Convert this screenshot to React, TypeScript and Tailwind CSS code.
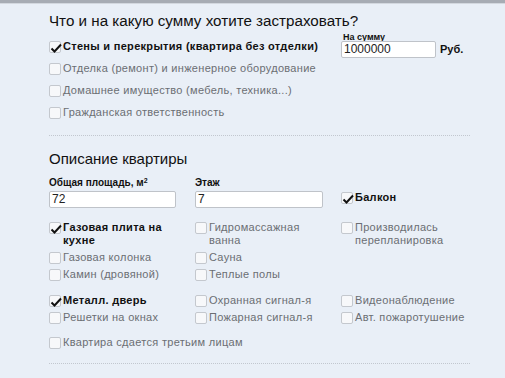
import React from "react";

function Box({ checked }: { checked?: boolean }) {
  return (
    <span className="relative block w-[12px] h-[12px] shrink-0 rounded-[2px] border border-[#c4c8ce] bg-[#f7f8fa]">
      {checked && (
        <svg viewBox="0 0 14 14" className="absolute left-[-1px] top-[-1px] w-[14px] h-[14px]">
          <path d="M2.5 7.5 L5.5 10.5 L12 3.5" fill="none" stroke="#111" strokeWidth="2" />
        </svg>
      )}
    </span>
  );
}

function Check({ label, checked, className = "" }: { label: React.ReactNode; checked?: boolean; className?: string }) {
  return (
    <div className={`flex items-start gap-[2px] text-[11px] leading-[13px] ${className}`}>
      <div className="pt-[1px]"><Box checked={checked} /></div>
      <span
        className={
          checked
            ? "font-bold text-[#111] tracking-[0.3px]"
            : "text-[#6b6e73] tracking-[0.3px]"
        }
      >
        {label}
      </span>
    </div>
  );
}

const field = "h-[17px] bg-white border border-[#bfc3c9] rounded-[2px] px-[2px] text-[12px] leading-[15px] text-[#222]";

export default function App() {
  return (
    <div className="w-[505px] h-[378px] bg-[#e9eff7] overflow-hidden" style={{ fontFamily: '"Liberation Sans", Arial, sans-serif' }}>
      <div className="h-[3px] bg-[#a7acb4]" />
      <div className="h-[1px] bg-[#d3d8df]" />
      <div className="pl-[49px] pr-[35px]">
        <h2 className="mt-[7px] text-[15.2px] leading-[20px] text-[#111]">Что и на какую сумму хотите застраховать?</h2>

        <div className="flex">
          <div className="w-[292px] pt-[9px] flex flex-col gap-[9px]">
            <Check checked label="Стены и перекрытия (квартира без отделки)" />
            <Check label="Отделка (ремонт) и инженерное оборудование" />
            <Check label="Домашнее имущество (мебель, техника...)" />
            <Check label="Гражданская ответственность" />
          </div>
          <div className="pt-[2px]">
            <div className="text-[9px] leading-[8px] font-bold text-[#111] pl-[2px]">На сумму</div>
            <div className="flex items-center gap-[4px]">
              <div className={`${field} w-[95px]`}>1000000</div>
              <span className="text-[11px] font-bold text-[#111]">Руб.</span>
            </div>
          </div>
        </div>

        <div className="mt-[16px] border-t border-dotted border-[#c2c7cf] w-[421px]" />

        <h2 className="mt-[13px] text-[15px] leading-[20px] text-[#111]">Описание квартиры</h2>

        <div className="mt-[8px] grid grid-cols-[146px_146px_146px]">
          <div>
            <div className="text-[10px] leading-[12px] font-bold text-[#111]">
              Общая площадь, м<sup className="text-[7px]">2</sup>
            </div>
            <div className={`${field} mt-[2px] w-[127px]`}>72</div>
          </div>
          <div>
            <div className="text-[10px] leading-[12px] font-bold text-[#111]">Этаж</div>
            <div className={`${field} mt-[2px] w-[128px]`}>7</div>
          </div>
          <div className="pt-[14px]">
            <Check checked label="Балкон" />
          </div>
        </div>

        <div className="mt-[13px] grid grid-cols-[146px_146px_146px] gap-y-[4px]">
          <Check checked label={<>Газовая плита на<br />кухне</>} />
          <Check label={<>Гидромассажная<br />ванна</>} />
          <Check label={<>Производилась<br />перепланировка</>} />
          <Check label="Газовая колонка" />
          <Check label="Сауна" />
          <div />
          <Check label="Камин (дровяной)" />
          <Check label="Теплые полы" />
          <div />
        </div>

        <div className="mt-[13px] grid grid-cols-[146px_146px_146px] gap-y-[4px]">
          <Check checked label="Металл. дверь" />
          <Check label="Охранная сигнал-я" />
          <Check label="Видеонаблюдение" />
          <Check label="Решетки на окнах" />
          <Check label="Пожарная сигнал-я" />
          <Check label="Авт. пожаротушение" />
        </div>

        <Check className="mt-[12px]" label="Квартира сдается третьим лицам" />

        <div className="mt-[14px] border-t border-dotted border-[#c2c7cf] w-[421px]" />
      </div>
    </div>
  );
}
